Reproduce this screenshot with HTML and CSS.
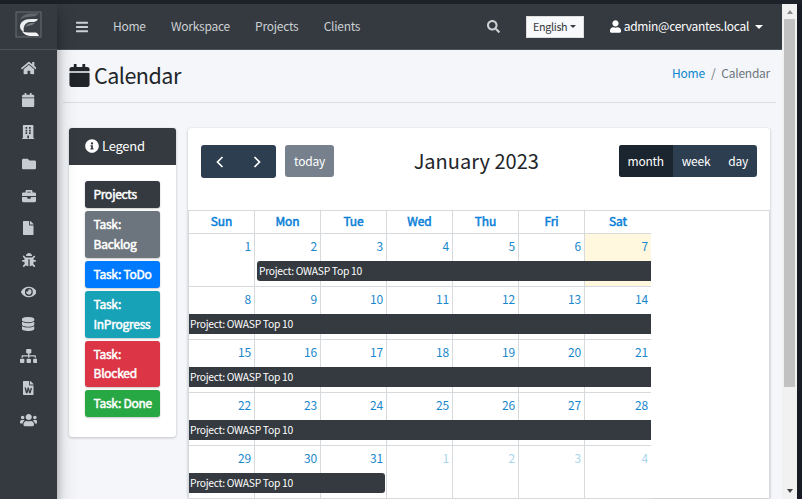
FILE: index.html
```html
<!DOCTYPE html>
<html lang="en">
<head>
<meta charset="utf-8">
<title>Calendar</title>
<link rel="stylesheet" href="styles.css">
</head>
<body>
<div class="window">
  <aside class="sidebar">
    <div class="brand">
      <svg width="27" height="27" viewBox="0 0 27 27"><rect x="1" y="1" width="25" height="25" fill="#3b4047" stroke="#686d73"/><path d="M24 2.500H15Q8 3 5 8.500Q10 5.500 17 5.500Q21 5.500 24 2.500Z" fill="#62676d"/><path d="M23 8H16C9 8 5 11.500 5 15.500C5 18 6.500 20 9 21C8 16 9.500 12.500 14 11H19Q22 10.500 23 8Z" fill="#eceef0"/><path d="M10 17Q11 13 16 12H20Q17 15 12 15Z" fill="#777b80"/><path d="M7 20.500Q11 21.800 15 21.500H21Q23 22 24 25H15Q10 24.500 7 20.500Z" fill="#f4f4f4"/></svg>
    </div>
    <nav class="menu">
      <a><svg viewBox="0 0 576 512"><path d="M280.400 148.300L96 300.100V464a16 16 0 0 0 16 16l112-.3a16 16 0 0 0 16-16V368a16 16 0 0 1 16-16h64a16 16 0 0 1 16 16v95.600a16 16 0 0 0 16 16l112 .4a16 16 0 0 0 16-16V300L295.700 148.300a12.200 12.200 0 0 0-15.300 0zM571.600 251.500L488 182.600V44a12 12 0 0 0-12-12h-56a12 12 0 0 0-12 12v72.600L318.500 43a48 48 0 0 0-61 0L4.300 251.500a12 12 0 0 0-1.600 16.900l25.500 31a12 12 0 0 0 17 1.600l235.200-193.700a12.200 12.200 0 0 1 15.300 0L530.900 301a12 12 0 0 0 16.900-1.600l25.500-31a12 12 0 0 0-1.700-16.900z"/></svg></a>
      <a><svg viewBox="0 0 448 512"><path d="M12 192h424c6.600 0 12 5.400 12 12v260c0 26.500-21.500 48-48 48H48c-26.500 0-48-21.500-48-48V204c0-6.600 5.400-12 12-12zm436-44v-36c0-26.500-21.500-48-48-48h-48V12c0-6.600-5.400-12-12-12h-40c-6.600 0-12 5.400-12 12v52H160V12c0-6.600-5.400-12-12-12h-40c-6.600 0-12 5.400-12 12v52H48C21.500 64 0 85.500 0 112v36c0 6.600 5.400 12 12 12h424c6.600 0 12-5.400 12-12z"/></svg></a>
      <a><svg viewBox="0 0 448 512"><path fill-rule="evenodd" d="M436 480h-20V24c0-13.300-10.700-24-24-24H56C42.700 0 32 10.700 32 24v456H12c-6.600 0-12 5.400-12 12v20h448v-20c0-6.600-5.400-12-12-12zM128 76h64v64h-64zM256 76h64v64h-64zM128 172h64v64h-64zM256 172h64v64h-64zM128 268h64v64h-64zM256 268h64v64h-64zM192 384h64v96h-64z"/></svg></a>
      <a><svg viewBox="0 0 512 512"><path d="M464 128H272l-64-64H48C21.500 64 0 85.500 0 112v288c0 26.500 21.500 48 48 48h416c26.500 0 48-21.500 48-48V176c0-26.500-21.500-48-48-48z"/></svg></a>
      <a><svg viewBox="0 0 512 512"><path d="M320 336c0 8.800-7.200 16-16 16h-96c-8.800 0-16-7.200-16-16v-48H0v144c0 25.600 22.400 48 48 48h416c25.600 0 48-22.400 48-48V288H320v48zm144-208h-80V80c0-25.600-22.400-48-48-48H176c-25.600 0-48 22.400-48 48v48H48c-25.600 0-48 22.400-48 48v80h512v-80c0-25.600-22.400-48-48-48zm-144 0H192V96h128v32z"/></svg></a>
      <a><svg viewBox="0 0 384 512"><path d="M224 136V0H24C10.700 0 0 10.700 0 24v464c0 13.300 10.700 24 24 24h336c13.300 0 24-10.700 24-24V160H248c-13.200 0-24-10.800-24-24zm160-14.100v6.100H256V0h6.100c6.400 0 12.500 2.500 17 7l97.900 98c4.500 4.500 7 10.600 7 16.900z"/></svg></a>
      <a><svg viewBox="0 0 512 512"><path d="M512 289c-.5 17.400-15.200 31-32.600 31H424v16c0 21.900-4.900 42.600-13.600 61.100l60.200 60.300c12.500 12.500 12.500 32.800 0 45.300s-32.800 12.500-45.300 0l-54.700-54.800C345.900 468 314.400 480 280 480V236c0-6.600-5.400-12-12-12h-24c-6.600 0-12 5.400-12 12v244c-34.400 0-65.900-12-90.600-32.100l-54.700 54.700c-12.500 12.500-32.800 12.500-45.300 0s-12.500-32.800 0-45.300l60.200-60.200C92.900 378.600 88 357.900 88 336v-16H32.600C15.200 320 .5 306.400 0 289c-.5-18.100 14-33 32-33h56v-58.700l-46.600-46.700c-12.500-12.500-12.500-32.800 0-45.300s32.800-12.500 45.300 0L141.300 160h229.500l54.600-54.600c12.500-12.500 32.800-12.500 45.300 0s12.500 32.800 0 45.300L424 197.300V256h56c18 0 32.500 14.900 32 33zM257 0c-61.900 0-112 50.100-112 112h224C369 50.100 318.900 0 257 0z"/></svg></a>
      <a><svg viewBox="0 0 576 512"><path d="M572.500 241.400C518.300 135.600 410.900 64 288 64S57.700 135.600 3.500 241.400a32.400 32.400 0 0 0 0 29.200C57.700 376.400 165.100 448 288 448s230.300-71.600 284.500-177.400a32.400 32.400 0 0 0 0-29.200zM288 400a144 144 0 1 1 144-144 143.900 143.900 0 0 1-144 144zm0-240a95.300 95.300 0 0 0-25.300 3.800 47.900 47.900 0 0 1-66.900 66.900A95.800 95.800 0 1 0 288 160z"/></svg></a>
      <a><svg viewBox="0 0 448 512"><path d="M448 73.100v45.800C448 159.100 347.700 192 224 192S0 159.100 0 118.900V73.100C0 32.900 100.300 0 224 0s224 32.900 224 73.100zM448 176v102.900C448 319.100 347.700 352 224 352S0 319.100 0 278.900V176c48.100 33.100 136.200 48.600 224 48.600S399.900 209.100 448 176zm0 160v102.900C448 479.100 347.700 512 224 512S0 479.100 0 438.900V336c48.100 33.100 136.200 48.600 224 48.600S399.900 369.100 448 336z"/></svg></a>
      <a><svg viewBox="0 0 640 512"><path d="M128 352H32c-17.700 0-32 14.300-32 32v96c0 17.700 14.300 32 32 32h96c17.700 0 32-14.300 32-32v-96c0-17.700-14.300-32-32-32zm-24-80h192v48h48v-48h192v48h48v-57.600c0-21.200-17.200-38.400-38.400-38.400H344v-64h40c17.700 0 32-14.300 32-32V32c0-17.700-14.300-32-32-32H256c-17.700 0-32 14.300-32 32v96c0 17.700 14.300 32 32 32h40v64H94.400C73.200 224 56 241.200 56 262.400V320h48v-48zm264 80h-96c-17.700 0-32 14.300-32 32v96c0 17.700 14.300 32 32 32h96c17.700 0 32-14.300 32-32v-96c0-17.700-14.300-32-32-32zm240 0h-96c-17.700 0-32 14.300-32 32v96c0 17.700 14.300 32 32 32h96c17.700 0 32-14.300 32-32v-96c0-17.700-14.300-32-32-32z"/></svg></a>
      <a><svg viewBox="0 0 384 512"><path fill-rule="evenodd" d="M224 136V0H24C10.700 0 0 10.700 0 24v464c0 13.300 10.700 24 24 24h336c13.300 0 24-10.700 24-24V160H248c-13.200 0-24-10.800-24-24zm57.100 120H330l-52 192h-57l-29-115-29 115h-57L54 240h55l29 130 32-130h44l33 130z M384 121.900v6.100H256V0h6.100c6.400 0 12.500 2.500 17 7l97.900 98c4.500 4.500 7 10.600 7 16.900z"/></svg></a>
      <a><svg viewBox="0 0 640 512"><path d="M96 224c35.300 0 64-28.700 64-64s-28.700-64-64-64-64 28.700-64 64 28.700 64 64 64zm448 0c35.300 0 64-28.700 64-64s-28.700-64-64-64-64 28.700-64 64 28.700 64 64 64zm32 32h-64c-17.600 0-33.500 7.100-45.100 18.600 40.300 22.100 68.900 62 75.100 109.400h66c17.700 0 32-14.300 32-32v-32c0-35.300-28.700-64-64-64zm-256 0c61.900 0 112-50.100 112-112S381.900 32 320 32 208 82.100 208 144s50.100 112 112 112zm76.800 32h-8.300c-20.800 10-43.900 16-68.500 16s-47.600-6-68.500-16h-8.300C179.600 288 128 339.600 128 403.200V432c0 26.500 21.500 48 48 48h288c26.500 0 48-21.500 48-48v-28.800c0-63.600-51.600-115.200-115.200-115.200zm-223.700-13.400C161.500 263.100 145.600 256 128 256H64c-35.300 0-64 28.700-64 64v32c0 17.700 14.300 32 32 32h65.900c6.300-47.400 34.900-87.300 75.200-109.400z"/></svg></a>
    </nav>
  </aside>

  <div class="page">
    <header class="navbar">
      <svg class="bars" viewBox="0 0 448 512"><path d="M16 132h416c8.800 0 16-7.200 16-16V76c0-8.800-7.200-16-16-16H16C7.200 60 0 67.200 0 76v40c0 8.800 7.200 16 16 16zm0 160h416c8.800 0 16-7.200 16-16v-40c0-8.800-7.200-16-16-16H16c-8.800 0-16 7.200-16 16v40c0 8.800 7.200 16 16 16zm0 160h416c8.800 0 16-7.200 16-16v-40c0-8.800-7.200-16-16-16H16c-8.800 0-16 7.200-16 16v40c0 8.800 7.200 16 16 16z"/></svg>
      <nav class="links"><a>Home</a><a>Workspace</a><a>Projects</a><a>Clients</a></nav>
      <svg class="search" viewBox="0 0 512 512"><path d="M505 442.700L405.300 343c-4.500-4.500-10.600-7-17-7H372c27.600-35.300 44-79.700 44-128C416 93.100 322.900 0 208 0S0 93.100 0 208s93.100 208 208 208c48.300 0 92.700-16.400 128-44v16.300c0 6.400 2.500 12.500 7 17l99.700 99.700c9.400 9.400 24.600 9.400 33.900 0l28.300-28.300c9.400-9.400 9.400-24.600.1-34zM208 336c-70.700 0-128-57.200-128-128 0-70.700 57.200-128 128-128 70.700 0 128 57.200 128 128 0 70.700-57.200 128-128 128z"/></svg>
      <button class="lang"><span>English</span><i class="caret"></i></button>
      <div class="user">
        <svg viewBox="0 0 448 512"><path d="M224 256c70.700 0 128-57.300 128-128S294.700 0 224 0 96 57.300 96 128s57.300 128 128 128zm89.600 32h-16.700c-22.200 10.200-46.900 16-72.900 16s-50.600-5.800-72.900-16h-16.700C60.200 288 0 348.200 0 422.400V464c0 26.500 21.500 48 48 48h352c26.500 0 48-21.500 48-48v-41.600c0-74.200-60.200-134.400-134.400-134.400z"/></svg>
        <span>admin@cervantes.local</span><i class="caret"></i>
      </div>
    </header>

    <div class="title-row">
      <h1><svg viewBox="0 0 448 512"><path d="M12 192h424c6.600 0 12 5.400 12 12v260c0 26.500-21.500 48-48 48H48c-26.500 0-48-21.500-48-48V204c0-6.600 5.400-12 12-12zm436-44v-36c0-26.500-21.500-48-48-48h-48V12c0-6.600-5.400-12-12-12h-40c-6.600 0-12 5.400-12 12v52H160V12c0-6.600-5.400-12-12-12h-40c-6.600 0-12 5.400-12 12v52H48C21.500 64 0 85.500 0 112v36c0 6.600 5.400 12 12 12h424c6.600 0 12-5.400 12-12z"/></svg><span>Calendar</span></h1>
      <div class="crumbs"><a>Home</a><span>/</span><span>Calendar</span></div>
    </div>

    <main class="content">
      <section class="card legend">
        <h2><svg viewBox="0 0 512 512"><path d="M256 8C119 8 8 119 8 256s111 248 248 248 248-111 248-248S393 8 256 8zm0 110c23.200 0 42 18.800 42 42s-18.800 42-42 42-42-18.800-42-42 18.800-42 42-42zm56 254c0 6.600-5.400 12-12 12h-88c-6.600 0-12-5.400-12-12v-24c0-6.600 5.400-12 12-12h12v-64h-12c-6.600 0-12-5.400-12-12v-24c0-6.600 5.400-12 12-12h64c6.600 0 12 5.400 12 12v100h12c6.600 0 12 5.400 12 12v24z"/></svg><span>Legend</span></h2>
        <div class="tags">
          <div class="tag dark">Projects</div>
          <div class="tag gray">Task:<br>Backlog</div>
          <div class="tag blue">Task: ToDo</div>
          <div class="tag teal">Task:<br>InProgress</div>
          <div class="tag red">Task:<br>Blocked</div>
          <div class="tag green">Task: Done</div>
        </div>
      </section>

      <section class="card calendar">
        <div class="toolbar">
          <div class="group arrows">
            <button><svg viewBox="0 0 8 12"><path d="M6.500 1L1.500 6l5 5"/></svg></button>
            <button><svg viewBox="0 0 8 12"><path d="M1.500 1l5 5-5 5"/></svg></button>
          </div>
          <button class="today">today</button>
          <h2>January 2023</h2>
          <div class="group views"><button class="active">month</button><button>week</button><button>day</button></div>
        </div>
        <div class="grid">
          <div class="heads"><span>Sun</span><span>Mon</span><span>Tue</span><span>Wed</span><span>Thu</span><span>Fri</span><span>Sat</span></div>
          <div class="week"><span>1</span><span>2</span><span>3</span><span>4</span><span>5</span><span>6</span><span class="now">7</span><div class="event first">Project: OWASP Top 10</div></div>
          <div class="week"><span>8</span><span>9</span><span>10</span><span>11</span><span>12</span><span>13</span><span>14</span><div class="event">Project: OWASP Top 10</div></div>
          <div class="week"><span>15</span><span>16</span><span>17</span><span>18</span><span>19</span><span>20</span><span>21</span><div class="event">Project: OWASP Top 10</div></div>
          <div class="week"><span>22</span><span>23</span><span>24</span><span>25</span><span>26</span><span>27</span><span>28</span><div class="event">Project: OWASP Top 10</div></div>
          <div class="week"><span>29</span><span>30</span><span>31</span><span class="other">1</span><span class="other">2</span><span class="other">3</span><span class="other">4</span><div class="event last">Project: OWASP Top 10</div></div>
        </div>
      </section>
    </main>
  </div>

  <div class="scrollbar"><i class="up"></i><div class="thumb"></div><i class="down"></i></div>
</div>
</body>
</html>
```
FILE: styles.css
```css
* { box-sizing: border-box; }
body {
  margin: 0;
  width: 802px;
  height: 499px;
  overflow: hidden;
  background: #191b24;
  color: #212529;
  font: 12px/19px "Noto Sans CJK JP", "Open Sans", sans-serif;
  letter-spacing: -.25px;
}
h1, h2 { margin: 0; font-weight: 400; }
button { border: 0; margin: 0; padding: 0; font: inherit; letter-spacing: inherit; color: inherit; background: none; }
svg { display: block; fill: currentColor; flex: none; }
a { color: inherit; }

.window {
  display: flex;
  height: 499px;
  border-top: 4px solid #1c2029;
  padding-right: 5px;
}
.sidebar {
  flex: none;
  position: relative;
  width: 57px;
  background: #343a40;
  color: #c6cbd2;
  box-shadow: 0 10px 20px rgba(0,0,0,.25), 0 8px 8px rgba(0,0,0,.22);
}
.brand {
  display: flex;
  justify-content: center;
  align-items: center;
  height: 46px;
  padding-bottom: 4px;
  border-bottom: 1px solid #4b545c;
}
.menu { padding-top: 2px; }
.menu a { display: flex; height: 32px; align-items: center; justify-content: center; }
.menu svg { height: 14px; }

.page { flex: none; width: 725px; background: #f4f6f9; }
.navbar {
  display: flex;
  align-items: center;
  height: 46px;
  padding: 0 19px;
  background: #343a40;
  border-bottom: 1px solid #4b545c;
  color: #cdd0d3;
}
.bars { width: 12px; height: 14px; }
.links { display: flex; gap: 25.2px; margin-left: 25px; padding-bottom: 2px; }
.search { width: 13px; height: 13px; margin-left: auto; }
.caret { border: 4px solid transparent; border-top-color: currentColor; border-bottom: 0; }
.lang {
  display: flex;
  align-items: center;
  justify-content: center;
  gap: 3px;
  width: 58px;
  height: 22px;
  margin: 0 26px 0 26px;
  background: #f8f9fa;
  border: 1px solid #ddd;
  color: #343a40;
  font-size: 10.8px;
  letter-spacing: -.35px;
}
.lang .caret { border-width: 3.5px; border-bottom: 0; }
.user { display: flex; align-items: center; color: #fff; letter-spacing: -.3px; }
.user span { padding-bottom: 2px; }
.user svg { width: 11px; height: 13px; margin-right: 3px; }
.user .caret { margin-left: 6px; }

.title-row {
  display: flex;
  justify-content: space-between;
  height: 53px;
  margin: 0 6px;
  padding: 9px 6px 0;
  border-bottom: 1px solid #dadde1;
}
.title-row h1 { display: flex; align-items: center; gap: 4px; height: 33px; font-size: 21.5px; line-height: 33px; }
.title-row h1 span { padding-bottom: 2px; letter-spacing: -.5px; }
.title-row h1 svg { width: 21px; height: 23px; }
.crumbs { display: flex; gap: 6px; padding-top: 4px; color: #6c757d; }
.crumbs a { color: #0b86d0; }

.content { display: flex; align-items: flex-start; gap: 12px; padding: 25px 12px 0; }
.card { background: #fff; border-radius: 3px; box-shadow: 0 0 1px rgba(0,0,0,.13), 0 1px 3px rgba(0,0,0,.2); }
.legend { width: 107px; height: 309px; overflow: hidden; }
.legend h2 {
  display: flex;
  align-items: center;
  gap: 3px;
  height: 37px;
  padding: 0 0 1px 16px;
  background: #343a40;
  color: #fff;
  font-size: 13px;
}
.legend h2 svg { width: 14px; height: 14px; }
.legend h2 span { padding-bottom: 1px; }
.tags { display: flex; flex-direction: column; gap: 3.2px; padding: 16px; }
.tag {
  padding: 3px 8.5px 4.5px;
  border-radius: 3px;
  color: #fff;
  -webkit-text-stroke: .5px currentColor;
  line-height: 19.5px;
  letter-spacing: -.25px;
  white-space: nowrap;
  box-shadow: 0 0 1px rgba(0,0,0,.13), 0 1px 2px rgba(0,0,0,.2);
}
.dark { background: #343a40; }
.gray { background: #6c757d; }
.blue { background: #007bff; }
.teal { background: #17a2b8; }
.red { background: #dc3545; }
.green { background: #28a745; }

.calendar { width: 582px; height: 370px; border-radius: 3px 3px 0 0; }
.toolbar { display: flex; align-items: flex-start; height: 82px; padding: 17px 13px 0; color: #fff; }
.group { display: flex; border-radius: 3px; overflow: hidden; background: #2c3e50; }
.arrows button { display: flex; align-items: center; justify-content: center; width: 37.5px; height: 33px; }
.arrows svg { width: 8px; height: 12px; fill: none; stroke: #fff; stroke-width: 1.7; }
.today { width: 49px; height: 32px; margin-left: 9px; padding-bottom: 2px; border-radius: 3px; background: #76818d; }
.toolbar h2 { flex: 1; text-align: center; color: #212529; font-size: 20px; line-height: 32px; letter-spacing: 0; }
.views button { height: 32px; padding: 0 9px 2px; }
.views .active { background: #1a252f; }

.grid { border: 1px solid #d7dadd; border-bottom: 0; color: #1987cb; }
.heads, .week { display: grid; grid-template-columns: repeat(7, 66px); width: 462px; border-bottom: 1px solid #d7dadd; }
.heads span, .week span { border-right: 1px solid #d7dadd; }
.heads span:nth-child(7), .week span:nth-child(7) { border-right: 0; }
.heads { height: 23px; color: #087fd8; -webkit-text-stroke: .5px currentColor; line-height: 20px; letter-spacing: -.1px; text-align: center; }
.week { position: relative; height: 53px; }
.week span { padding: 2px 3px 0 0; text-align: right; letter-spacing: -.1px; }
.week .now { background: #fff8df; }
.week .other { color: #a9d5ec; }
.event { position: absolute; top: 27px; left: 0; right: 0; height: 20px; padding-left: 1px; background: #343a40; color: #fff; font-size: 10.3px; letter-spacing: -.3px; line-height: 20px; }
.event.first { left: 68px; padding-left: 2px; border-radius: 3px 0 0 3px; }
.event.last { right: 266px; border-radius: 0 3px 3px 0; }

.scrollbar { flex: none; display: flex; flex-direction: column; align-items: center; width: 15px; background: #f1f1f1; }
.up { border: 3.5px solid transparent; border-bottom: 4px solid #8a8a8a; border-top: 0; margin: 6px 0 5px; }
.thumb { width: 11px; height: 368px; background: #c1c1c1; }
.down { border: 3.5px solid transparent; border-top: 4px solid #444; border-bottom: 0; margin: auto 0 6px; }
```
